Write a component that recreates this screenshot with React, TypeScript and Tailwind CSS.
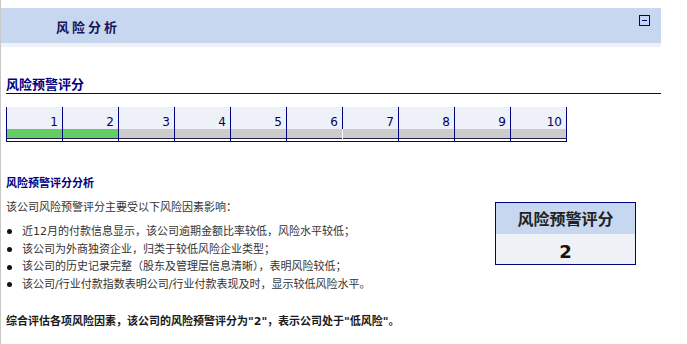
import React from 'react';

const FONT = { fontFamily: '"DejaVu Sans", "Noto Sans CJK SC", sans-serif' };

const FACTORS = [
  '近12月的付款信息显示，该公司逾期金额比率较低，风险水平较低；',
  '该公司为外商独资企业，归类于较低风险企业类型；',
  '该公司的历史记录完整（股东及管理层信息清晰），表明风险较低；',
  '该公司/行业付款指数表明公司/行业付款表现及时，显示较低风险水平。',
];

const SCORE = 2;

function ScaleBar() {
  const cells = Array.from({ length: 10 }, (_, i) => i + 1);
  return (
    <div className="ml-[5px] mt-[13px] flex w-[561px] border-b border-[#000080]">
      {cells.map((n) => (
        <div
          key={n}
          className={`flex flex-col ${n === 10 ? 'w-[57px] border-r border-[#000080]' : 'w-[56px]'}`}
        >
          <div className="flex h-[22px] items-end justify-end border-l border-[#000080] bg-[#eef1f7] pr-[4px] text-[12px] leading-[13px] text-[#000066]">
            {n}
          </div>
          <div className={n === 7 ? 'border-l border-transparent' : 'border-l border-[#000080]'}>
            <div className={`h-[9px] ${n <= SCORE ? 'bg-[#66cc66]' : 'bg-[#cccccc]'}`} />
            <div className="h-[1px] bg-[#22224a]" />
            <div className="h-[2px] bg-white" />
          </div>
        </div>
      ))}
    </div>
  );
}

export default function App() {
  return (
    <div className="h-[344px] w-[687px] overflow-hidden bg-white" style={FONT}>
      <div className="h-[344px] w-[661px] border-l border-[#c8c8c8]">
        <div className="h-[8px]" />
        <div className="flex h-[35px] justify-between bg-[#c6d7ef]">
          <div className="pl-[55px] pt-[10px] text-[13px] font-bold leading-[19px] tracking-[3px] text-[#14145a]">
            风险分析
          </div>
          <div className="mr-[11px] mt-[7px] flex h-[11px] w-[11px] items-center justify-center border border-[#000080]">
            <div className="h-[1px] w-[5px] bg-[#000080]" />
          </div>
        </div>
        <div className="h-[4px] bg-[#eef1f6]" />

        <div className="ml-[5px] mt-[29px] border-b border-[#000080] text-[13px] font-bold leading-[17px] text-[#000080]">
          风险预警评分
        </div>

        <ScaleBar />

        <div className="mt-[34px] flex">
          <div className="flex-1 pl-[5px]">
            <div className="text-[11px] font-bold leading-[16px] text-[#000080]">风险预警评分分析</div>
            <div className="mt-[8px] text-[11px] leading-[16px] text-[#333333]">
              该公司风险预警评分主要受以下风险因素影响：
            </div>
            <ul className="mt-[7px]">
              {FACTORS.map((f) => (
                <li key={f} className="flex items-center text-[11px] leading-[17.7px] text-[#333333]">
                  <span className="ml-[1px] mr-[10px] h-[5px] w-[5px] shrink-0 rounded-full bg-[#111111]" />
                  {f}
                </li>
              ))}
            </ul>
            <div className="mt-[20px] text-[11px] font-bold leading-[16px] text-[#1a1a1a]">
              综合评估各项风险因素，该公司的风险预警评分为"2"，表示公司处于"低风险"。
            </div>
          </div>
          <div className="mr-[25px] mt-[26px] h-[63px] w-[141px] border border-[#000080]">
            <div className="flex h-[31px] items-center justify-center bg-[#c6d7ef] pt-[2px] text-[16px] font-bold text-[#222222]">
              风险预警评分
            </div>
            <div className="flex h-[30px] items-center justify-center bg-[#eef1f6] pt-[5px] text-[18px] font-bold leading-[20px] text-[#111111]">
              {SCORE}
            </div>
          </div>
        </div>
      </div>
    </div>
  );
}
